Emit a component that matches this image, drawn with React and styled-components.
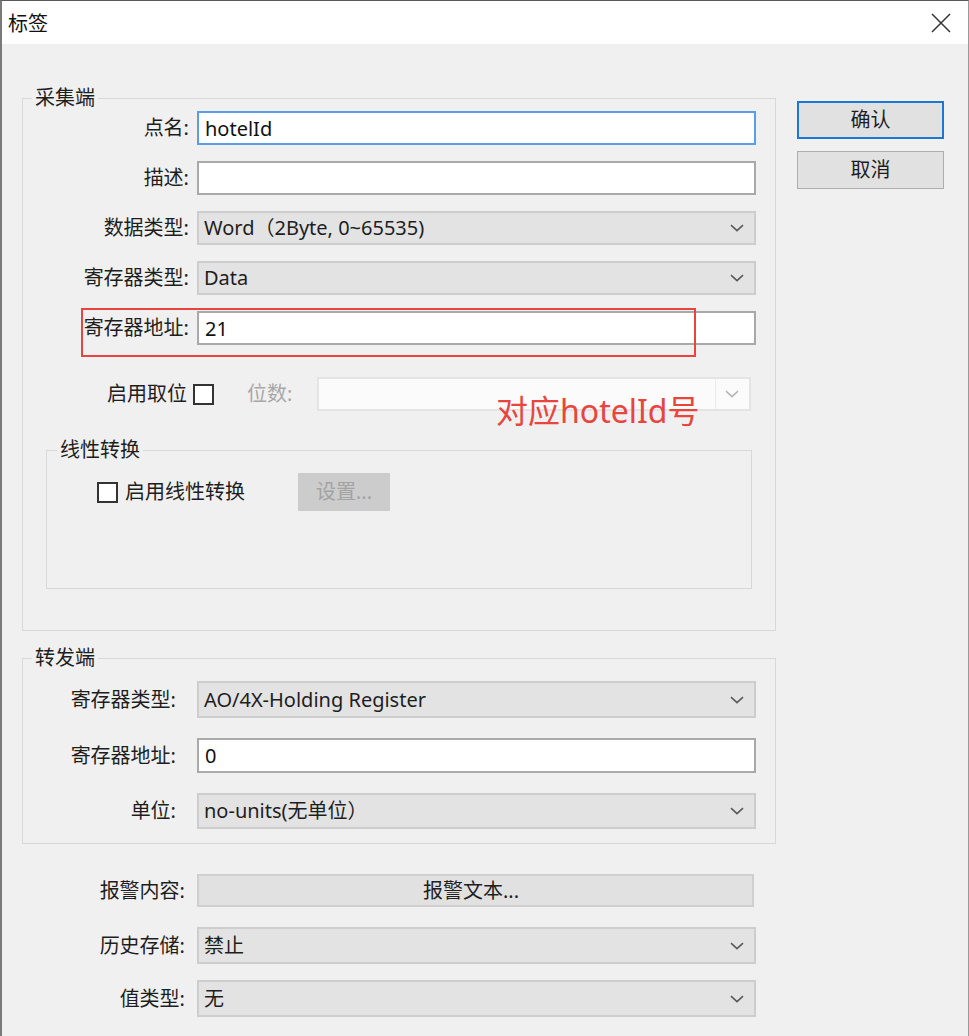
import React from "react";
import styled, { createGlobalStyle } from "styled-components";

const GlobalStyle = createGlobalStyle`
  html, body {
    margin: 0;
    padding: 0;
    background: #f0f0f0;
  }
  body {
    font-family: "Noto Sans", "Noto Sans CJK SC", sans-serif;
  }
`;

const Window = styled.div`
  position: relative;
  width: 969px;
  height: 1036px;
  box-sizing: border-box;
  border-top: 1px solid #5a5a5a;
  border-left: 2px solid #7a7a7a;
  border-right: 1px solid #9a9a9a;
  background: #f0f0f0;
  color: #1e1e1e;
  font-size: 20px;
  overflow: hidden;
`;

const TitleBar = styled.div`
  height: 43px;
  display: flex;
  align-items: center;
  justify-content: space-between;
  padding: 0 17px 0 6px;
  background: #ffffff;
  font-size: 20px;
  color: #111;
`;

const Body = styled.div`
  display: flex;
  gap: 21px;
  padding: 42px 0 0 20px;
`;

const LeftColumn = styled.div`
  width: 754px;
  display: flex;
  flex-direction: column;
`;

const RightColumn = styled.div`
  display: flex;
  flex-direction: column;
  gap: 12px;
  margin-top: 15px;
`;

const GroupBox = styled.fieldset`
  margin: ${(p) => p.$margin || "0"};
  padding: ${(p) => p.$padding || "0"};
  border: 1px solid #d8d8d8;
  min-width: 0;
  width: ${(p) => p.$width}px;
  box-sizing: border-box;
`;

const Legend = styled.legend`
  margin-left: ${(p) => p.$indent || 9}px;
  padding: 0 3px;
  font-size: 20px;
  line-height: 24px;
  color: #1e1e1e;
`;

const Fields = styled.div`
  display: flex;
  flex-direction: column;
  gap: ${(p) => p.$gap}px;
`;

const Row = styled.div`
  display: grid;
  grid-template-columns: ${(p) => p.$label}px ${(p) => p.$field || 559}px;
  column-gap: ${(p) => p.$gap}px;
  align-items: center;
  margin-top: ${(p) => p.$top || 0}px;
`;

const Label = styled.span`
  text-align: right;
  white-space: nowrap;
  line-height: 24px;
  color: ${(p) => (p.$disabled ? "#a8a8a8" : "#1e1e1e")};
`;

const TextInput = styled.input`
  box-sizing: border-box;
  height: ${(p) => p.$h || 34}px;
  width: 100%;
  margin: 0;
  padding: 0 6px;
  font: inherit;
  font-size: 20px;
  color: #111;
  background: #fff;
  border: 2px solid ${(p) => (p.$focused ? "#5a9fe4" : "#a9a9a9")};
  outline: none;
`;

const SelectBox = styled.div`
  box-sizing: border-box;
  height: ${(p) => p.$h || 34}px;
  display: flex;
  align-items: center;
  justify-content: space-between;
  padding: 0 10px 0 5px;
  background: ${(p) => (p.$disabled ? "#fbfbfb" : "#e3e3e3")};
  border: 2px solid ${(p) => (p.$disabled ? "#e4e4e4" : "#cdcdcd")};
  color: #1e1e1e;
  line-height: 24px;
  white-space: nowrap;
`;

const ArrowCell = styled.span`
  display: flex;
  align-items: center;
  align-self: stretch;
  padding-left: ${(p) => (p.$divided ? 9 : 0)}px;
  border-left: ${(p) => (p.$divided ? "1px solid #ececec" : "none")};
`;

const WideButton = styled.div`
  box-sizing: border-box;
  height: ${(p) => p.$h || 33}px;
  display: flex;
  align-items: center;
  padding-left: 224px;
  background: #e1e1e1;
  border: 2px solid #cfcfcf;
  line-height: 24px;
`;

const BitRow = styled.div`
  display: flex;
  align-items: center;
  margin-top: 32px;
  height: 34px;
`;

const BitLabel = styled.span`
  width: 164px;
  text-align: right;
  line-height: 24px;
`;

const Check = styled.span`
  box-sizing: border-box;
  display: inline-block;
  width: 21px;
  height: 21px;
  border: 2px solid #333;
  background: #fff;
  margin: ${(p) => p.$margin || "0"};
`;

const BitCountLabel = styled.span`
  margin-left: 33px;
  width: 70px;
  color: #a8a8a8;
  line-height: 24px;
`;

const BitSelect = styled.div`
  width: 434px;
`;

const LinearRow = styled.div`
  display: flex;
  align-items: center;
  padding-left: 50px;
`;

const CheckText = styled.span`
  margin-left: 7px;
  line-height: 24px;
`;

const DisabledButton = styled.div`
  box-sizing: border-box;
  width: 92px;
  height: 38px;
  margin-left: 53px;
  display: flex;
  align-items: center;
  justify-content: center;
  background: #cccccc;
  color: #a3a3a3;
  line-height: 24px;
`;

const DialogButton = styled.div`
  box-sizing: border-box;
  width: 147px;
  height: 38px;
  display: flex;
  align-items: center;
  justify-content: center;
  background: #e1e1e1;
  border: ${(p) => (p.$primary ? "2px solid #1a78d6" : "1px solid #adadad")};
  font-size: 20px;
  line-height: 24px;
`;

const BottomFields = styled.div`
  display: flex;
  flex-direction: column;
  margin-top: 30px;
`;

const Highlight = styled.div`
  position: absolute;
  left: 79px;
  top: 307px;
  width: 615px;
  height: 49px;
  box-sizing: border-box;
  border: 2px solid #e8453e;
  pointer-events: none;
`;

const Note = styled.div`
  position: absolute;
  left: 494px;
  top: 391px;
  font-family: "Noto Sans", "Noto Sans CJK SC", sans-serif;
  font-size: 32px;
  line-height: 38px;
  color: #e8453e;
  white-space: nowrap;
`;

const Chevron = ({ color = "#5a5a5a" }) => (
  <svg width="14" height="8" viewBox="0 0 14 8">
    <path d="M1 1.2 L7 6.6 L13 1.2" fill="none" stroke={color} strokeWidth="1.6" />
  </svg>
);

const CloseIcon = () => (
  <svg width="20" height="20" viewBox="0 0 20 20">
    <path d="M1 1 L19 19 M19 1 L1 19" stroke="#333" strokeWidth="1.5" />
  </svg>
);

const Select = ({ value, h, disabled, divided }) => (
  <SelectBox $h={h} $disabled={disabled}>
    <span>{value}</span>
    <ArrowCell $divided={divided}>
      <Chevron color={disabled ? "#b5b5b5" : "#5a5a5a"} />
    </ArrowCell>
  </SelectBox>
);

const App = () => (
  <Window>
    <GlobalStyle />
    <TitleBar>
      <span>标签</span>
      <CloseIcon />
    </TitleBar>
    <Body>
      <LeftColumn>
        <GroupBox $width={754} $padding="1px 0 41px 0">
          <Legend>采集端</Legend>
          <Fields $gap={16}>
            <Row $label={166} $gap={8}>
              <Label>点名:</Label>
              <TextInput $focused defaultValue="hotelId" />
            </Row>
            <Row $label={166} $gap={8}>
              <Label>描述:</Label>
              <TextInput defaultValue="" />
            </Row>
            <Row $label={166} $gap={8}>
              <Label>数据类型:</Label>
              <Select value="Word（2Byte, 0~65535)" />
            </Row>
            <Row $label={166} $gap={8}>
              <Label>寄存器类型:</Label>
              <Select value="Data" />
            </Row>
            <Row $label={166} $gap={8}>
              <Label>寄存器地址:</Label>
              <TextInput defaultValue="21" />
            </Row>
          </Fields>
          <BitRow>
            <BitLabel>启用取位</BitLabel>
            <Check $margin="0 0 0 6px" />
            <BitCountLabel>位数:</BitCountLabel>
            <BitSelect>
              <Select value="" disabled divided />
            </BitSelect>
          </BitRow>
          <GroupBox $width={706} $margin="27px 0 0 23px" $padding="11px 0 77px 0">
            <Legend $indent={10}>线性转换</Legend>
            <LinearRow>
              <Check />
              <CheckText>启用线性转换</CheckText>
              <DisabledButton>设置...</DisabledButton>
            </LinearRow>
          </GroupBox>
        </GroupBox>

        <GroupBox $width={754} $margin="15px 0 0 0" $padding="11px 0 14px 0">
          <Legend>转发端</Legend>
          <Fields $gap={20}>
            <Row $label={153} $gap={21}>
              <Label>寄存器类型:</Label>
              <Select h={37} value="AO/4X-Holding Register" />
            </Row>
            <Row $label={153} $gap={21}>
              <Label>寄存器地址:</Label>
              <TextInput $h={35} defaultValue="0" />
            </Row>
            <Row $label={153} $gap={21}>
              <Label>单位:</Label>
              <Select h={36} value="no-units(无单位）" />
            </Row>
          </Fields>
        </GroupBox>

        <BottomFields>
          <Row $label={163} $gap={12} $field={557}>
            <Label>报警内容:</Label>
            <WideButton>报警文本...</WideButton>
          </Row>
          <Row $label={163} $gap={12} $top={20}>
            <Label>历史存储:</Label>
            <Select h={37} value="禁止" />
          </Row>
          <Row $label={163} $gap={12} $top={16}>
            <Label>值类型:</Label>
            <Select h={37} value="无" />
          </Row>
        </BottomFields>
      </LeftColumn>

      <RightColumn>
        <DialogButton $primary>确认</DialogButton>
        <DialogButton>取消</DialogButton>
      </RightColumn>
    </Body>

    <Highlight />
    <Note>对应hotelId号</Note>
  </Window>
);

export default App;
